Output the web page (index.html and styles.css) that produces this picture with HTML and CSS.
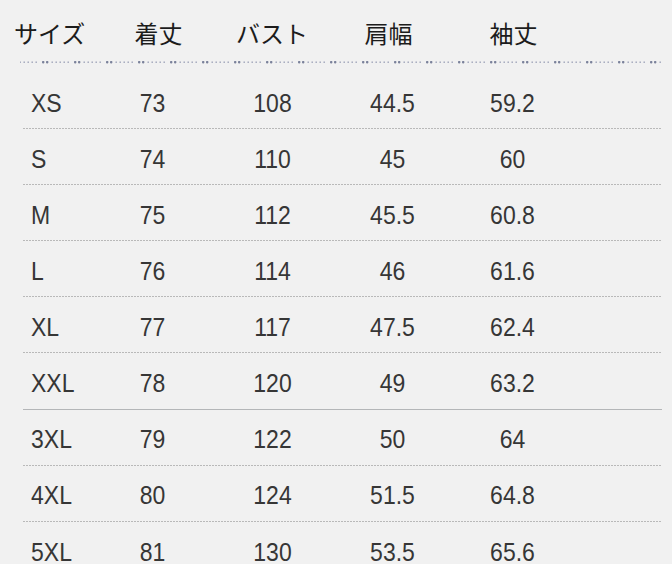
FILE: index.html
```html
<!DOCTYPE html>
<html lang="ja">
<head>
<meta charset="utf-8">
<link rel="stylesheet" href="styles.css">
</head>
<body>
<div class="chart">
  <div class="head">
    <span class="h first">サイズ</span>
    <span class="h">着丈</span>
    <span class="h">バスト</span>
    <span class="h">肩幅</span>
    <span class="h">袖丈</span>
  </div>
  <svg class="dots" width="642" height="4" xmlns="http://www.w3.org/2000/svg">
    <defs>
      <pattern id="dp" x="21" y="0" width="32" height="4" patternUnits="userSpaceOnUse">
        <rect x="1" y="1" width="2.4" height="2.4" rx="0.8" fill="#7b829b"/>
        <rect x="5" y="1" width="2.4" height="2.4" rx="0.8" fill="#7b829b"/>
        <rect x="10.5" y="1.5" width="1.4" height="1.4" fill="#9aa0b6"/>
        <rect x="14.5" y="1.5" width="1.4" height="1.4" fill="#9aa0b6"/>
        <rect x="18.5" y="1.5" width="1.4" height="1.4" fill="#9aa0b6"/>
        <rect x="22.5" y="1.5" width="1.4" height="1.4" fill="#9aa0b6"/>
        <rect x="26.5" y="1.5" width="1.4" height="1.4" fill="#9aa0b6"/>
      </pattern>
    </defs>
    <rect x="0" y="0" width="642" height="4" fill="url(#dp)"/>
  </svg>
  <div class="rows">
    <div class="row"><span class="c size"><i>XS</i></span><span class="c"><i>73</i></span><span class="c"><i>108</i></span><span class="c"><i>44.5</i></span><span class="c"><i>59.2</i></span></div>
    <div class="row"><span class="c size"><i>S</i></span><span class="c"><i>74</i></span><span class="c"><i>110</i></span><span class="c"><i>45</i></span><span class="c"><i>60</i></span></div>
    <div class="row"><span class="c size"><i>M</i></span><span class="c"><i>75</i></span><span class="c"><i>112</i></span><span class="c"><i>45.5</i></span><span class="c"><i>60.8</i></span></div>
    <div class="row"><span class="c size"><i>L</i></span><span class="c"><i>76</i></span><span class="c"><i>114</i></span><span class="c"><i>46</i></span><span class="c"><i>61.6</i></span></div>
    <div class="row"><span class="c size"><i>XL</i></span><span class="c"><i>77</i></span><span class="c"><i>117</i></span><span class="c"><i>47.5</i></span><span class="c"><i>62.4</i></span></div>
    <div class="row solid"><span class="c size"><i>XXL</i></span><span class="c"><i>78</i></span><span class="c"><i>120</i></span><span class="c"><i>49</i></span><span class="c"><i>63.2</i></span></div>
    <div class="row"><span class="c size"><i>3XL</i></span><span class="c"><i>79</i></span><span class="c"><i>122</i></span><span class="c"><i>50</i></span><span class="c"><i>64</i></span></div>
    <div class="row"><span class="c size"><i>4XL</i></span><span class="c"><i>80</i></span><span class="c"><i>124</i></span><span class="c"><i>51.5</i></span><span class="c"><i>64.8</i></span></div>
    <div class="row"><span class="c size"><i>5XL</i></span><span class="c"><i>81</i></span><span class="c"><i>130</i></span><span class="c"><i>53.5</i></span><span class="c"><i>65.6</i></span></div>
  </div>
</div>
</body>
</html>
```
FILE: styles.css
```css
html, body {
  margin: 0;
  padding: 0;
}
body {
  background: #f1f1f1;
  width: 672px;
  height: 564px;
  overflow: hidden;
}
.chart {
  display: flex;
  flex-direction: column;
}
.head {
  display: grid;
  grid-template-columns: 88px 113px 114px 119px 131px;
  padding: 19px 0 13px 14px;
  font-family: "Noto Sans CJK JP", "Noto Sans", sans-serif;
  font-size: 24px;
  line-height: 28px;
  color: #1c1c1c;
}
.h {
  text-align: center;
  white-space: nowrap;
}
.h.first {
  text-align: left;
}
.dots {
  display: block;
  margin-left: 20px;
}
.rows {
  margin-top: 9px;
  display: flex;
  flex-direction: column;
}
.row {
  box-sizing: border-box;
  margin-left: 23px;
  width: 639px;
  height: 56.1px;
  padding-top: 3.5px;
  display: grid;
  grid-template-columns: 69.5px repeat(4, 120px) 1fr;
  align-items: center;
  font-family: "Liberation Sans", Arial, sans-serif;
  font-size: 23px;
  line-height: 20px;
  color: #363636;
  background-image: repeating-linear-gradient(90deg, #b9b9b9 0 2px, transparent 2px 3px);
  background-size: 100% 1px;
  background-position: left bottom;
  background-repeat: no-repeat;
}
.row.solid {
  background-image: linear-gradient(#b4b6b8, #b4b6b8);
}
.c {
  text-align: center;
}
.c.size {
  text-align: left;
  padding-left: 8px;
}
.c i {
  font-style: normal;
  display: inline-block;
  transform: scaleY(1.15);
}
```
